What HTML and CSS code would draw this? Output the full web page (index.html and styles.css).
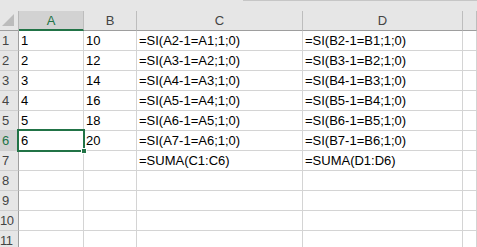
FILE: index.html
```html
<!DOCTYPE html>
<html>
<head>
<meta charset="utf-8">
<link rel="stylesheet" href="styles.css">
</head>
<body>
<div class="sheet">
  <div class="strip"><div class="strip-line"></div></div>
  <div class="grid">
    <div class="hd corner"><svg width="13" height="13" viewBox="0 0 13 13"><polygon points="12,0 12,12 0,12" fill="#bcbcbc"/></svg></div>
    <div class="hd col sel">A</div>
    <div class="hd col">B</div>
    <div class="hd col">C</div>
    <div class="hd col">D</div>
    <div class="hd col"></div>

    <div class="hd row">1</div><div class="c">1</div><div class="c">10</div><div class="c">=SI(A2-1=A1;1;0)</div><div class="c">=SI(B2-1=B1;1;0)</div><div class="c"></div>
    <div class="hd row">2</div><div class="c">2</div><div class="c">12</div><div class="c">=SI(A3-1=A2;1;0)</div><div class="c">=SI(B3-1=B2;1;0)</div><div class="c"></div>
    <div class="hd row">3</div><div class="c">3</div><div class="c">14</div><div class="c">=SI(A4-1=A3;1;0)</div><div class="c">=SI(B4-1=B3;1;0)</div><div class="c"></div>
    <div class="hd row">4</div><div class="c">4</div><div class="c">16</div><div class="c">=SI(A5-1=A4;1;0)</div><div class="c">=SI(B5-1=B4;1;0)</div><div class="c"></div>
    <div class="hd row">5</div><div class="c">5</div><div class="c">18</div><div class="c">=SI(A6-1=A5;1;0)</div><div class="c">=SI(B6-1=B5;1;0)</div><div class="c"></div>
    <div class="hd row sel">6</div><div class="c active">6<div class="selbox"><div class="handle"></div></div></div><div class="c">20</div><div class="c">=SI(A7-1=A6;1;0)</div><div class="c">=SI(B7-1=B6;1;0)</div><div class="c"></div>
    <div class="hd row">7</div><div class="c"></div><div class="c"></div><div class="c">=SUMA(C1:C6)</div><div class="c">=SUMA(D1:D6)</div><div class="c"></div>
    <div class="hd row">8</div><div class="c"></div><div class="c"></div><div class="c"></div><div class="c"></div><div class="c"></div>
    <div class="hd row">9</div><div class="c"></div><div class="c"></div><div class="c"></div><div class="c"></div><div class="c"></div>
    <div class="hd row two">10</div><div class="c"></div><div class="c"></div><div class="c"></div><div class="c"></div><div class="c"></div>
    <div class="hd row two">11</div><div class="c"></div><div class="c"></div><div class="c"></div><div class="c"></div><div class="c"></div>
  </div>
</div>
</body>
</html>
```
FILE: styles.css
```css
html, body {
  margin: 0;
  padding: 0;
  background: #ffffff;
}
.sheet {
  width: 477px;
  height: 247px;
  overflow: hidden;
  font-family: "Liberation Sans", Arial, sans-serif;
  font-size: 13px;
}
.strip {
  height: 11px;
  background: #e6e6e6;
}
.strip-line {
  margin-left: 243px;
  height: 1px;
  background: #c6c6c6;
}
.grid {
  display: grid;
  grid-template-columns: 19px 65px 53px 166px 160px 1fr;
  grid-auto-rows: 20px;
}
.grid > div {
  box-sizing: border-box;
  line-height: 19px;
  white-space: nowrap;
}
.c {
  border-right: 1px solid #d4d4d4;
  border-bottom: 1px solid #d4d4d4;
  padding-left: 2px;
  color: #000;
}
.hd {
  background: #e6e6e6;
  color: #444;
}
.corner {
  border-right: 1px solid #b8b8b8;
  border-bottom: 1px solid #9e9e9e;
  display: flex;
  align-items: flex-end;
  justify-content: flex-end;
  padding: 0 3px 3px 0;
}
.corner svg {
  display: block;
}
.col {
  text-align: center;
  border-right: 1px solid #bdbdbd;
  border-bottom: 1px solid #9e9e9e;
}
.col.sel {
  background: #d2d2d2;
  color: #217346;
  border-bottom: 2px solid #217346;
}
.row {
  padding-left: 2px;
  border-right: 1px solid #9e9e9e;
  border-bottom: 1px solid #cfcfcf;
}
.row.two {
  padding-left: 0;
  letter-spacing: -0.5px;
}
.row.sel {
  background: #d2d2d2;
  color: #217346;
}
.active {
  position: relative;
}
.selbox {
  position: absolute;
  left: -2px;
  top: -2px;
  right: -2px;
  bottom: -2px;
  border: 2px solid #217346;
}
.handle {
  position: absolute;
  right: -4px;
  bottom: -4px;
  width: 4px;
  height: 4px;
  background: #217346;
  border: 1px solid #ffffff;
}
```
